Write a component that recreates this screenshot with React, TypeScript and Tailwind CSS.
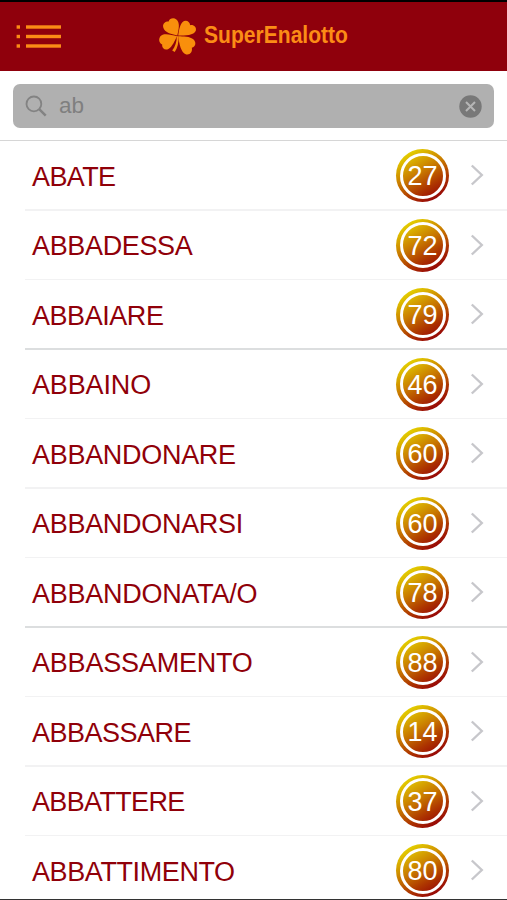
interface Entry {
  word: string;
  number: number;
  tracking: string;
  strong?: boolean;
}

const entries: Entry[] = [
  { word: "ABATE", number: 27, tracking: "tracking-[-0.6px]" },
  { word: "ABBADESSA", number: 72, tracking: "tracking-[-0.35px]" },
  { word: "ABBAIARE", number: 79, tracking: "tracking-[-0.45px]", strong: true },
  { word: "ABBAINO", number: 46, tracking: "tracking-[-0.15px]" },
  { word: "ABBANDONARE", number: 60, tracking: "tracking-[-0.3px]" },
  { word: "ABBANDONARSI", number: 60, tracking: "tracking-[-0.3px]" },
  { word: "ABBANDONATA/O", number: 78, tracking: "tracking-[-0.25px]", strong: true },
  { word: "ABBASSAMENTO", number: 88, tracking: "tracking-[-0.2px]" },
  { word: "ABBASSARE", number: 14, tracking: "tracking-[-0.5px]" },
  { word: "ABBATTERE", number: 37, tracking: "tracking-[-0.65px]" },
  { word: "ABBATTIMENTO", number: 80, tracking: "tracking-[-0.4px]" },
];

function MenuIcon() {
  return (
    <svg width="46" height="24" viewBox="0 0 46 24" fill="#fb8c16">
      {[0.3, 9.8, 19.3].map((y) => (
        <g key={y}>
          <rect x="0.6" y={y} width="3.4" height="3.4" />
          <rect x="10" y={y} width="35" height="3.4" />
        </g>
      ))}
    </svg>
  );
}

function CloverIcon() {
  return (
    <svg width="38" height="38" viewBox="0 0 38 38" fill="#f98f0c">
      <path d="M18.3 17.4C13.5 16.2 7.8 15.4 5 11.2C2.6 7.4 4.9 3.2 9.6 3.4C10.6 0.4 14.4 -0.8 17.4 1.4C21.6 4.8 19.4 12 18.3 17.4Z" />
      <path d="M19.2 17.6C19.8 13.2 20.6 7.4 23.4 4.2C26.4 1.4 30.6 3 31.2 7.2C35 6.6 37.8 9.6 36.8 12.8C35 17.4 26.4 17.6 19.2 17.6Z" />
      <path d="M18 18.2C15.8 22.6 13.4 28.6 9.4 31C6 32.8 2.6 30.4 3.2 26.4C0.2 25.2 -0.8 21.4 1.2 18.4C4.4 14.4 12 16.8 18 18.2Z" />
      <path d="M19.2 18.2C24 18.4 31 18.2 34.6 21.4C37.6 24.6 36.6 28.6 32.8 29.8C33.8 33.8 30.8 37.4 27.2 36.4C21.8 34.6 20.2 25.6 19.2 18.2Z" />
      <path d="M17.8 18L19.5 18.4C19.8 24 18.6 30 15.7 34L13.2 32.6C16.2 28.7 17.8 24 17.8 18Z" />
    </svg>
  );
}

function SearchBar() {
  return (
    <div className="flex h-[70px] shrink-0 items-start border-b-[1.5px] border-[#d6d6d6] px-[13px] pt-[13px]">
      <div className="flex h-11 w-full items-center rounded-[7px] bg-[#b0b0b0] pl-3 pr-3">
        <svg width="22" height="22" viewBox="0 0 22 22" fill="none" stroke="#838383">
          <circle cx="8.9" cy="8.9" r="7.4" strokeWidth="1.8" />
          <path d="M14.2 14.2L20.7 20.7" strokeWidth="2.5" />
        </svg>
        <span className="ml-3 flex-1 text-[22.5px] leading-none text-[#7f7f7f]">ab</span>
        <svg width="23" height="23" viewBox="0 0 23 23">
          <circle cx="11.5" cy="11.5" r="11.2" fill="#787878" />
          <path d="M7 7L16 16M16 7L7 16" stroke="#b6b6b6" strokeWidth="2" />
        </svg>
      </div>
    </div>
  );
}

function NumberBall({ value }: { value: number }) {
  return (
    <div className="flex size-[53px] items-center justify-center rounded-full bg-[linear-gradient(150deg,#e8dc00_8%,#c97b00_44%,#ad3500_68%,#930008_90%)]">
      <div className="flex size-[46px] items-center justify-center rounded-full border-3 border-white">
        <span className="mt-0.5 text-[27px] leading-none text-white">{value}</span>
      </div>
    </div>
  );
}

function EntryRow({ entry }: { entry: Entry }) {
  return (
    <li className="ml-[25px] flex h-[69.55px] shrink-0 flex-col">
      <div className="flex flex-1 items-center pl-[7px] pr-[23px] pt-px">
        <span className={`mt-[3px] flex-1 text-[27px] leading-none text-[#900009] ${entry.tracking}`}>{entry.word}</span>
        <NumberBall value={entry.number} />
        <svg className="-mt-px ml-[21px]" width="14" height="22" viewBox="0 0 14 22" fill="none" stroke="#c7c7cb" strokeWidth="2.4">
          <path d="M1.8 1.5L11.8 11L1.8 20.5" />
        </svg>
      </div>
      <div className={entry.strong ? "h-[1.5px] bg-[#dcdedf]" : "h-[1.5px] bg-[#f2f2f3]"} />
    </li>
  );
}

export default function App() {
  return (
    <div className="flex h-[900px] w-[507px] flex-col overflow-hidden border-b border-[#333] bg-white font-['Liberation_Sans',Arial,sans-serif]">
      <header className="flex h-[71px] shrink-0 items-center border-t-2 border-black bg-[#8f000c] pl-4">
        <button aria-label="Menu">
          <MenuIcon />
        </button>
        <div className="ml-[97px] flex items-center">
          <CloverIcon />
          <h1 className="ml-[7px] -mt-[3px] origin-left scale-x-[0.86] text-[24.5px] font-bold leading-none text-[#fb8c16]">
            SuperEnalotto
          </h1>
        </div>
      </header>
      <SearchBar />
      <ul className="flex flex-col">
        {entries.map((entry) => (
          <EntryRow key={entry.word} entry={entry} />
        ))}
      </ul>
    </div>
  );
}
